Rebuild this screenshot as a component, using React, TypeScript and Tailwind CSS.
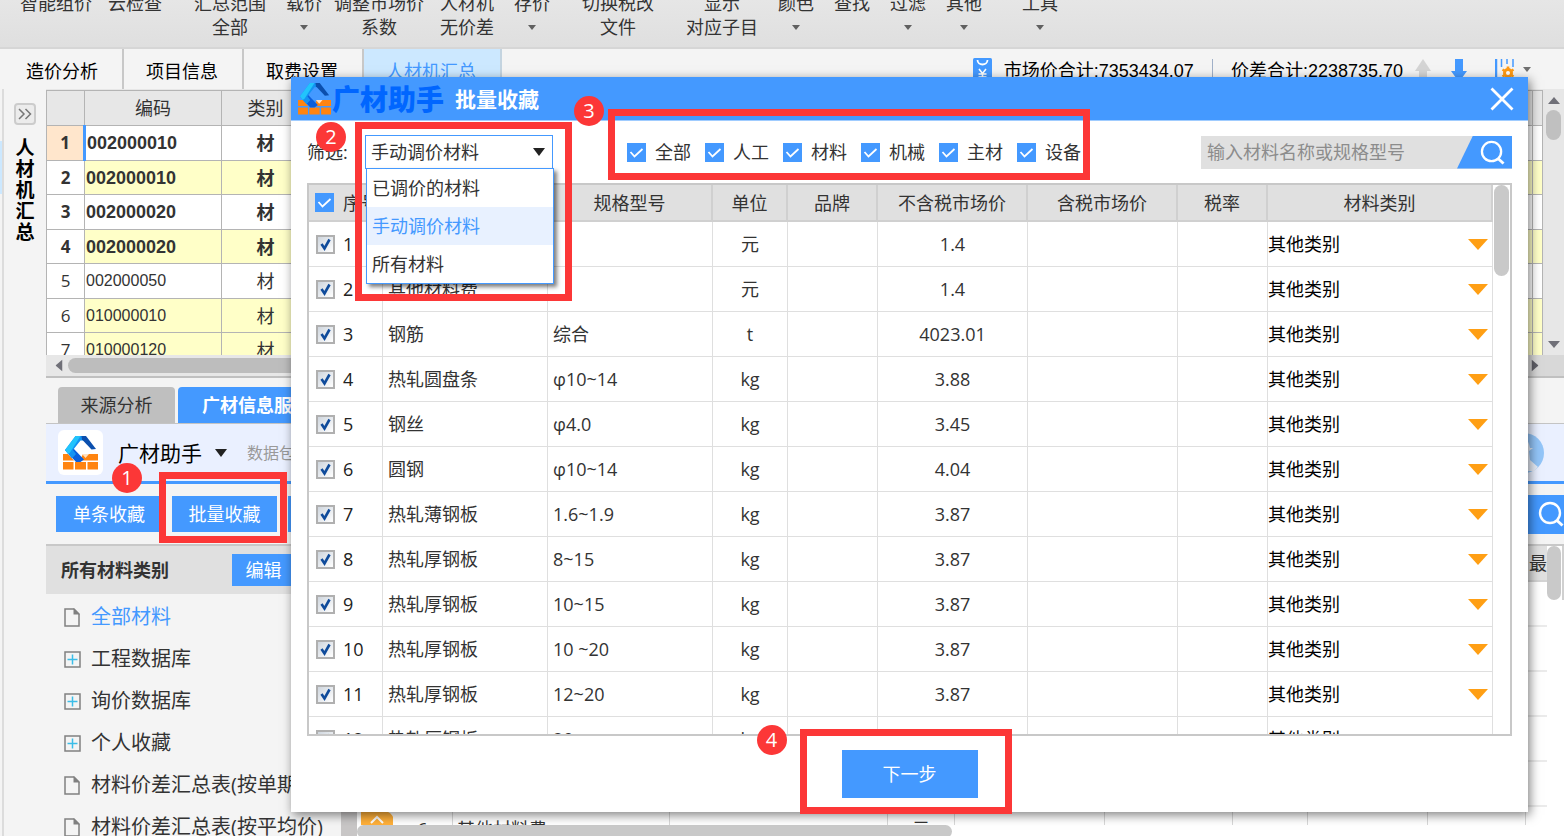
import React from "react";

type RibbonItem = { top: string; bottom?: string; caret?: boolean; gap: string };

const ribbon: RibbonItem[] = [
  { top: "智能组价", gap: "ml-5" },
  { top: "云检查", gap: "ml-4" },
  { top: "汇总范围", bottom: "全部", gap: "ml-8" },
  { top: "载价", caret: true, gap: "ml-5" },
  { top: "调整市场价", bottom: "系数", gap: "ml-3" },
  { top: "人材机", bottom: "无价差", gap: "ml-4" },
  { top: "存价", caret: true, gap: "ml-5" },
  { top: "切换税改", bottom: "文件", gap: "ml-8" },
  { top: "显示", bottom: "对应子目", gap: "ml-8" },
  { top: "颜色", caret: true, gap: "ml-5" },
  { top: "查找", gap: "ml-5" },
  { top: "过滤", caret: true, gap: "ml-5" },
  { top: "其他", caret: true, gap: "ml-5" },
  { top: "工具", caret: true, gap: "ml-10" },
];

const codes = [
  "002000010",
  "002000010",
  "002000020",
  "002000020",
  "002000050",
  "010000010",
  "010000120",
];

const tree = [
  { label: "全部材料", leaf: true, active: true },
  { label: "工程数据库" },
  { label: "询价数据库" },
  { label: "个人收藏" },
  { label: "材料价差汇总表(按单期)", leaf: true },
  { label: "材料价差汇总表(按平均价)", leaf: true },
];

const materials = [
  ["", "", "元", "1.4"],
  ["其他材料费", "", "元", "1.4"],
  ["钢筋", "综合", "t", "4023.01"],
  ["热轧圆盘条", "φ10~14", "kg", "3.88"],
  ["钢丝", "φ4.0", "kg", "3.45"],
  ["圆钢", "φ10~14", "kg", "4.04"],
  ["热轧薄钢板", "1.6~1.9", "kg", "3.87"],
  ["热轧厚钢板", "8~15", "kg", "3.87"],
  ["热轧厚钢板", "10~15", "kg", "3.87"],
  ["热轧厚钢板", "10 ~20", "kg", "3.87"],
  ["热轧厚钢板", "12~20", "kg", "3.87"],
  ["热轧厚钢板", "20", "kg", "3.87"],
];

const kinds = ["全部", "人工", "材料", "机械", "主材", "设备"];
const options = ["已调价的材料", "手动调价材料", "所有材料"];

function Caret({ className }: { className: string }) {
  return (
    <svg viewBox="0 0 12 7" preserveAspectRatio="none" className={className} aria-hidden="true">
      <path d="M0 0h12L6 7z" fill="currentColor" />
    </svg>
  );
}

function Search({ className }: { className: string }) {
  return (
    <svg viewBox="0 0 26 26" className={className} fill="none" stroke="currentColor" strokeWidth="2.4" aria-hidden="true">
      <circle cx="12" cy="12" r="10" />
      <path d="M19 19.5l5.5 5" strokeWidth="3" />
    </svg>
  );
}

function Logo({ className }: { className: string }) {
  return (
    <svg viewBox="0 0 36 34" className={className} aria-hidden="true">
      <path d="M0 18h5l6 6.500H0zM20 18h15v6.500H17zM0 26h10.500v7.500H0zM12 26h11v7.500H12zM24.500 26H35v7.500H24.500z" fill="#ff8410" />
      <path d="M19 18h7l-3.500 4z" fill="#ffe0bf" />
      <path d="M2 14l8-2 11 11.500-3.500 2.500h-4.500z" fill="#0a5fdc" />
      <path d="M2 14L12.500 0H23l-1.500 4.500h-4L10 14l3 4-4 4.500z" fill="#1493f2" />
      <path d="M2 14L12.500 0h5L7 16.500l-2 1.500z" fill="#22c4fc" />
      <path d="M18.500 0H23l10 13-4.500.500L19 3.500z" fill="#0b4fae" />
    </svg>
  );
}

function FileIcon() {
  return (
    <svg viewBox="0 0 16 19" className="h-[19px] w-4" fill="none" aria-hidden="true">
      <path d="M1 1h9l5 5v12H1z" stroke="#808080" strokeWidth="1.500" />
      <path d="M9.500 0v6.500H16z" fill="#808080" />
    </svg>
  );
}

function PlusIcon() {
  return (
    <svg viewBox="0 0 17 17" className="h-[17px] w-[17px]" fill="none" aria-hidden="true">
      <rect x="1" y="1" width="15" height="15" stroke="#808080" strokeWidth="1.500" />
      <path d="M8.500 3.500v10M3.500 8.500h10" stroke="#3bbde8" strokeWidth="1.500" />
    </svg>
  );
}

function BlueCheck({ label }: { label: string }) {
  return (
    <span className="relative block h-[19px] w-[19px] shrink-0">
      <input type="checkbox" defaultChecked aria-label={label} className="block h-full w-full appearance-none bg-[#4499ff]" />
      <svg viewBox="0 0 19 19" className="pointer-events-none absolute inset-0" fill="none" aria-hidden="true">
        <path d="M3.500 9l4 4.500 8-7.500" stroke="#fff" strokeWidth="1.800" />
      </svg>
    </span>
  );
}

function RowCheck({ label }: { label: string }) {
  return (
    <span className="relative block h-[19px] w-[19px] shrink-0">
      <input
        type="checkbox"
        defaultChecked
        aria-label={label}
        className="block h-full w-full appearance-none border-2 border-[#b0b0b0] bg-linear-to-br from-[#cfd6de] to-white"
      />
      <svg viewBox="0 0 19 19" className="pointer-events-none absolute inset-0" fill="none" aria-hidden="true">
        <path d="M5.500 9l3 4.500 5-9" stroke="#0f4b9b" strokeWidth="2.600" />
      </svg>
    </span>
  );
}

function Badge({ n, place }: { n: number; place: string }) {
  return (
    <span
      className={`absolute z-30 flex h-[30px] w-[30px] items-center justify-center rounded-full bg-[#fc3737] text-[20px] leading-6 text-white ${place}`}
    >
      {n}
    </span>
  );
}

function Frame({ place }: { place: string }) {
  return <span className={`pointer-events-none absolute z-20 border-[7px] border-[#fc3737] ${place}`} />;
}

function TopBar() {
  return (
    <header>
      <nav className="flex h-[49px] items-end overflow-hidden border-b-2 border-[#d6d6d6] bg-linear-to-b from-[#e6e6e6] to-[#dfdfdf] pb-2">
        {ribbon.map((r) => (
          <button key={r.top} className={`flex shrink-0 flex-col items-center leading-6 whitespace-nowrap ${r.gap}`}>
            <span>{r.top}</span>
            <span className="flex h-6 items-center">
              {r.bottom}
              {r.caret && <Caret className="h-[5px] w-2 text-[#606060]" />}
            </span>
          </button>
        ))}
      </nav>
      <div className="flex h-10 items-stretch bg-[#f4f4f4] pl-1 text-black">
        {["造价分析", "项目信息", "取费设置"].map((t) => (
          <button key={t} className="w-[120px] border-r-2 border-[#c8c8c8] pt-1 pr-[2px]">
            {t}
          </button>
        ))}
        <button className="w-[138px] border-r-2 border-[#c4d4e0] bg-[#cce8ff] pt-1 pr-[2px] text-[#4499ff]">人材机汇总</button>
        <div className="ml-auto flex items-center gap-3 pr-[33px]">
          <svg viewBox="0 0 19 26" className="mt-1 h-[26px] w-[19px]" fill="none" aria-hidden="true">
            <rect width="19" height="26" rx="1.500" fill="#4499ff" />
            <path d="M4.500 2c0 6 10 6 10 0" stroke="#fff" strokeWidth="1.800" />
            <path d="M6 11l3.500 4.500L13 11M9.500 15v7M5.500 16h8M5.500 19h8" stroke="#fff" strokeWidth="1.600" />
          </svg>
          <span className="pt-[2px]">
            市场价合计<span className="font-['Liberation_Sans'] text-[18px]">:7353434.07</span>
          </span>
          <span className="mx-[6px] h-5 w-px bg-[#a0b0c8]" />
          <span className="pt-[2px]">
            价差合计<span className="font-['Liberation_Sans'] text-[18px]">:2238735.70</span>
          </span>
          <svg viewBox="0 0 16 24" className="mt-1 h-6 w-4" fill="#d4d4d4" aria-hidden="true">
            <path d="M8 0l8 12h-4v12H4V12H0z" />
          </svg>
          <svg viewBox="0 0 16 24" className="mx-2 mt-1 h-6 w-4" fill="#4499ff" aria-hidden="true">
            <path d="M8 23l8-11h-4V0H4v12H0z" />
          </svg>
          <span className="flex items-center gap-2 pl-2">
            <svg viewBox="0 0 20 24" className="mt-1 h-6 w-5" fill="none" aria-hidden="true">
              <path d="M1 0v24" stroke="#4499ff" strokeWidth="2.500" />
              <path d="M6.500 0v8M12 0v5M18 0v8" stroke="#4499ff" strokeWidth="1.500" />
              <circle cx="13" cy="14" r="3.500" stroke="#ff9a14" strokeWidth="3" />
              <path d="M13 7.500v13M7.500 10.500l11 7M7.500 17.500l11-7" stroke="#ff9a14" strokeWidth="2.600" />
              <circle cx="13" cy="14" r="2" fill="#fff" />
            </svg>
            <Caret className="h-[5px] w-2 text-[#707070]" />
          </span>
        </div>
      </div>
    </header>
  );
}

function CodeTable() {
  return (
    <div className="flex h-[266px] shrink-0 overflow-hidden bg-[#e7e7e7]">
      <div className="flex-1 pt-px">
        <table className="w-full table-fixed border-collapse text-center">
          <colgroup>
            <col className="w-[38px]" />
            <col className="w-[137px]" />
            <col className="w-[88px]" />
            <col />
            <col className="w-[10px]" />
          </colgroup>
          <thead>
            <tr className="h-[35px] bg-[#e7e7e7]">
              {["", "编码", "类别", "", ""].map((h, i) => (
                <th key={i} className="border border-[#b4b4b4] p-0 font-normal">
                  {h}
                </th>
              ))}
            </tr>
          </thead>
          <tbody>
            {codes.map((c, i) => {
              const bold = i < 4;
              const yellow = [1, 3, 5, 6].includes(i);
              return (
                <tr key={i} className={`${i % 2 ? "h-[34px]" : "h-[35px]"} ${yellow ? "bg-[#ffffc8]" : "bg-white"} ${bold ? "font-bold" : ""}`}>
                  <td className={`border border-[#b4b4b4] p-0 text-[17px] leading-6 ${i === 0 ? "border-r-[3px] border-r-[#4499ff] bg-[#ffe6cc]" : "bg-white"}`}>
                    {i + 1}
                  </td>
                  <td className={`border border-[#b4b4b4] p-0 pl-px text-left font-['Liberation_Sans'] leading-6 ${bold ? "text-[18px]" : "text-[16px]"}`}>
                    {c}
                  </td>
                  <td className="border border-[#b4b4b4] p-0 leading-6">材</td>
                  <td className="border border-[#b4b4b4] p-0" />
                  <td className="border border-[#b4b4b4] p-0" />
                </tr>
              );
            })}
          </tbody>
        </table>
      </div>
      <div className="flex w-[21px] flex-col items-center pt-2">
        <Caret className="h-[7px] w-3 rotate-180 text-[#707078]" />
        <span className="mt-[6px] h-[30px] w-[15px] rounded-full bg-[#c0c0c0]" />
        <Caret className="mt-auto mb-[7px] h-[7px] w-3 text-[#707078]" />
      </div>
    </div>
  );
}

function Workspace() {
  return (
    <div className="flex min-h-0 flex-1">
      <div className="w-1 border-r-2 border-[#dcdcdc] bg-[#f4f4f4] pt-[52px]">
        <div className="h-[53px] bg-[#cce8ff]" />
      </div>
      <aside className="flex w-[42px] flex-col items-center bg-[#f4f4f4] pt-[14px]">
        <button aria-label="展开" className="h-[22px] w-[22px] rounded border-2 border-[#cccccc] bg-[#ececec]">
          <svg viewBox="0 0 18 18" fill="none" stroke="#777" strokeWidth="1.500" aria-hidden="true">
            <path d="M3 4l5 5-5 5M9.500 4l5 5-5 5" />
          </svg>
        </button>
        <div className="mt-[13px] w-5 text-center text-[19px] leading-[21px] font-bold break-all text-black">人材机汇总</div>
      </aside>
      <main className="flex min-w-0 flex-1 flex-col">
        <CodeTable />
        <div className="flex h-[21px] shrink-0 items-center bg-[#e7e7e7] pl-[7px]">
          <Caret className="h-[7px] w-3 rotate-90 text-[#707078]" />
          <span className="ml-[3px] h-[15px] w-4/5 rounded-full bg-[#bdbdbd]" />
          <span className="ml-auto flex w-[35px] items-center self-stretch bg-[#d8d8d8]">
            <Caret className="h-[7px] w-3 -rotate-90 text-[#606068]" />
          </span>
        </div>
        <div className="flex h-12 shrink-0 items-end gap-[3px] border-t-2 border-b border-t-[#c0c0c0] border-b-[#c4c4c4] bg-[#f4f4f4] pl-3">
          <button className="h-9 w-[117px] rounded-t bg-[#bfbfbf]">来源分析</button>
          <button className="h-9 w-[156px] rounded-t bg-[#4499ff] font-bold text-white">广材信息服务</button>
        </div>
        <div className="flex h-[60px] shrink-0 items-center border-b-[3px] border-[#4499ff] bg-[#eaf0ff] pl-3">
          <span className="flex h-[45px] w-[45px] items-center justify-center rounded-md bg-white">
            <Logo className="h-[34px] w-9" />
          </span>
          <span className="ml-[15px] text-[21px] text-black">广材助手</span>
          <Caret className="ml-[13px] h-2 w-3 text-[#222]" />
          <span className="ml-5 text-[16px] text-[#999]">数据包</span>
          <svg viewBox="0 0 40 40" className="mr-5 ml-auto h-10 w-10" aria-hidden="true">
            <circle cx="20" cy="20" r="20" fill="#93c5f8" />
            <path d="M18 2c4 2 7 7 8 13h3l-4 3 1 9 8 7-4 4H0V2z" fill="#e8eef8" />
          </svg>
        </div>
        <div className="flex h-[60px] shrink-0 items-center bg-[#f4f4f4] pl-[10px] text-white">
          <button className="h-9 w-[106px] bg-[#4499ff]">单条收藏</button>
          <div className="relative ml-[10px]">
            <button className="h-9 w-[105px] bg-[#4499ff]">批量收藏</button>
            <Frame place="-top-6 -left-[13px] h-[71px] w-[128px]" />
            <Badge n={1} place="-top-[33px] -left-[60px]" />
          </div>
          <button aria-label="更多" className="ml-[11px] h-9 w-[106px] bg-[#4499ff]" />
          <button aria-label="搜索" className="ml-auto flex h-[39px] w-[50px] items-center justify-end bg-[#4499ff]">
            <Search className="h-[26px] w-[26px]" />
          </button>
        </div>
        <div className="flex min-h-0 flex-1 border-t-2 border-[#c8c8c8]">
          <section className="w-[295px] shrink-0 overflow-hidden bg-[#f4f4f4]">
            <div className="flex h-12 items-center bg-[#e0e0e0] pl-[15px]">
              <h2 className="font-bold">所有材料类别</h2>
              <button className="ml-auto h-8 w-[109px] bg-[#4499ff] pr-[46px] text-white">编辑</button>
            </div>
            <ul className="pt-[2px]">
              {tree.map((t) => (
                <li key={t.label} className={`flex h-[42px] items-center pl-[18px] text-[20px] whitespace-nowrap ${t.active ? "text-[#4499ff]" : ""}`}>
                  <span className="w-[27px]">{t.leaf ? <FileIcon /> : <PlusIcon />}</span>
                  {t.label}
                </li>
              ))}
            </ul>
          </section>
          <div className="w-4 shrink-0 bg-[#c8c6c6]" />
          <section className="flex min-w-0 flex-1 flex-col justify-between bg-white">
            <div className="flex items-start">
              <div className="flex-1">
                <div className="flex h-9 items-center justify-end border-b-2 border-[#d4d4d4] bg-[#e0e0e0]">最</div>
                {[0, 1, 2, 3, 4].map((n) => (
                  <div key={n} className="h-[45px] border-b-2 border-[#ebebeb]" />
                ))}
              </div>
              <div className="flex h-[54px] w-[17px] border-r-2 border-[#d0d0d0]">
                <span className="h-full w-[14px] rounded-full bg-[#c9c9c9]" />
              </div>
            </div>
            <div>
              <div className="flex h-[18px] items-stretch overflow-hidden pl-1">
                <svg viewBox="0 0 32 14" className="h-[14px] w-8 shrink-0 self-end" aria-hidden="true">
                  <path d="M0 0h22a10 10 0 0 1 10 14H0z" fill="#ffb03a" />
                  <path d="M10 12l6-6 6 6" stroke="#fff" strokeWidth="2" fill="none" />
                </svg>
                <span className="w-[60px] shrink-0 border-r border-[#d8d8d8] pt-[10px] text-center">6</span>
                <span className="w-[217px] shrink-0 border-r border-[#d8d8d8] pt-[10px] pl-1">其他材料费</span>
                <span className="w-[218px] shrink-0 border-r border-[#d8d8d8]" />
                <span className="w-[67px] shrink-0 border-r border-[#d8d8d8] pt-[10px] text-center">元</span>
                <span className="w-[150px] border-r border-[#d8d8d8]" />
                <span className="w-32 border-r border-[#d8d8d8]" />
                <span className="w-[75px] border-r border-[#d8d8d8]" />
                <span className="w-[120px] border-r border-[#d8d8d8]" />
                <span className="w-[98px] border-r border-[#d8d8d8]" />
              </div>
              <div className="h-[13px] w-[595px] rounded-full bg-[#c9c9c9]" />
            </div>
          </section>
        </div>
      </main>
    </div>
  );
}

const columns: [string, string][] = [
  ["", "w-[165px]"],
  ["规格型号", "w-[165px]"],
  ["单位", "w-[75px]"],
  ["品牌", "w-[90px]"],
  ["不含税市场价", "w-[150px]"],
  ["含税市场价", "w-[150px]"],
  ["税率", "w-[90px]"],
  ["材料类别", ""],
];

function FavoriteDialog() {
  const line = "border-r border-b border-[#dfdfdf] p-0";
  return (
    <div role="dialog" aria-label="批量收藏" className="absolute top-[77px] right-9 left-[291px] bg-white shadow-[2px_3px_10px_rgba(0,0,0,0.5)]">
      <div className="flex h-11 items-center border-b border-[#a0ccff] bg-[#4499ff] pl-[7px]">
        <Logo className="h-8 w-[34px]" />
        <span className="text-[28px] leading-10 font-black text-[#0066ff]">广材助手</span>
        <span className="ml-[11px] pt-px text-[21px] font-bold text-white">批量收藏</span>
        <button aria-label="关闭" className="mr-[14px] ml-auto">
          <svg viewBox="0 0 24 24" className="h-6 w-6" stroke="#fff" strokeWidth="2.800" aria-hidden="true">
            <path d="M1.500 1.500l21 21M22.500 1.500l-21 21" />
          </svg>
        </button>
      </div>
      <div className="relative flex h-[62px] items-center px-4">
        <label htmlFor="filter" className="w-[58px]">
          筛选:
        </label>
        <div className="relative">
          <select id="filter" defaultValue="手动调价材料" className="block h-[34px] w-[188px] appearance-none border border-[#4499ff] bg-white pl-[5px] leading-6">
            {options.map((o) => (
              <option key={o}>{o}</option>
            ))}
          </select>
          <Caret className="pointer-events-none absolute top-[13px] right-2 h-2 w-3 text-[#222]" />
          <ul role="listbox" className="absolute top-[33px] left-px z-10 w-[188px] border border-[#4499ff] bg-white shadow-[3px_3px_4px_rgba(0,0,0,0.5)]">
            {options.map((o, i) => (
              <li key={o} role="option" aria-selected={i === 1} className={`flex h-[38px] items-center pl-[5px] ${i === 1 ? "bg-[#e8f1ff] text-[#4499ff]" : ""}`}>
                {o}
              </li>
            ))}
          </ul>
          <Frame place="-top-[13px] -left-[10px] h-[179px] w-[217px]" />
          <Badge n={2} place="-top-[13px] -left-[49px]" />
        </div>
        <div className="relative ml-[74px] flex">
          {kinds.map((k) => (
            <label key={k} className="flex w-[78px] items-center gap-[9px]">
              <BlueCheck label={k} />
              {k}
            </label>
          ))}
          <Frame place="-top-[31px] -left-[19px] h-[71px] w-[482px]" />
          <Badge n={3} place="-top-[44px] -left-[53px]" />
        </div>
        <div className="ml-auto flex h-[33px] w-[311px] bg-[#e0e0e0]">
          <input
            aria-label="搜索材料"
            placeholder="输入材料名称或规格型号"
            className="min-w-0 flex-1 bg-transparent pl-[6px] outline-none placeholder:text-[#8c8c8c]"
          />
          <button aria-label="搜索" className="flex w-[55px] items-center justify-center bg-[#4499ff] pl-4 text-white [clip-path:polygon(16px_0,100%_0,100%_100%,0_100%)]">
            <Search className="h-[25px] w-[25px]" />
          </button>
        </div>
      </div>
      <div className="mx-4 flex h-[553px] overflow-hidden border-2 border-[#c8c8c8]">
        <table className="w-full table-fixed border-separate border-spacing-0 self-start">
          <thead>
            <tr className="h-[37px] bg-[#e0e0e0]">
              <th className="w-[74px] border-r-2 border-b-2 border-[#d0d0d0] p-0 font-normal">
                <span className="flex items-center gap-[9px] pl-[6px]">
                  <BlueCheck label="全选" />
                  序号
                </span>
              </th>
              {columns.map(([c, w], i) => (
                <th key={i} className={`border-r-2 border-b-2 border-[#d0d0d0] p-0 font-normal ${w}`}>
                  {c}
                </th>
              ))}
            </tr>
          </thead>
          <tbody>
            {materials.map(([name, spec, unit, price], i) => (
              <tr key={i} className="h-[45px] text-center">
                <td className={`${line} text-[#222]`}>
                  <span className="flex items-center gap-2 pl-[7px]">
                    <RowCheck label={`选择第${i + 1}行`} />
                    {i + 1}
                  </span>
                </td>
                <td className={`${line} pl-[5px]! text-left`}>{name}</td>
                <td className={`${line} pl-[5px]! text-left`}>{spec}</td>
                <td className={line}>{unit}</td>
                <td className={line} />
                <td className={line}>{price}</td>
                <td className={line} />
                <td className={line} />
                <td className={line}>
                  <button className="flex w-full items-center justify-between pr-1 text-black">
                    其他类别
                    <Caret className="h-[11px] w-5 text-[#ff9f14]" />
                  </button>
                </td>
              </tr>
            ))}
          </tbody>
        </table>
        <div className="w-[17px] shrink-0 px-px">
          <div className="h-[91px] rounded-full bg-[#c9c9c9]" />
        </div>
      </div>
      <div className="flex justify-center py-[14px]">
        <div className="relative">
          <button className="block h-12 w-[136px] bg-[#4499ff] text-white">下一步</button>
          <Frame place="-top-[21px] -left-[42px] h-[85px] w-[212px]" />
          <Badge n={4} place="-top-[25px] -left-[85px]" />
        </div>
      </div>
    </div>
  );
}

export default function App() {
  return (
    <div className="relative flex h-screen flex-col overflow-hidden bg-[#f4f4f4] font-['Open_Sans','Noto_Sans_CJK_SC',sans-serif] text-[18px] leading-6 text-[#333]">
      <TopBar />
      <Workspace />
      <FavoriteDialog />
    </div>
  );
}
